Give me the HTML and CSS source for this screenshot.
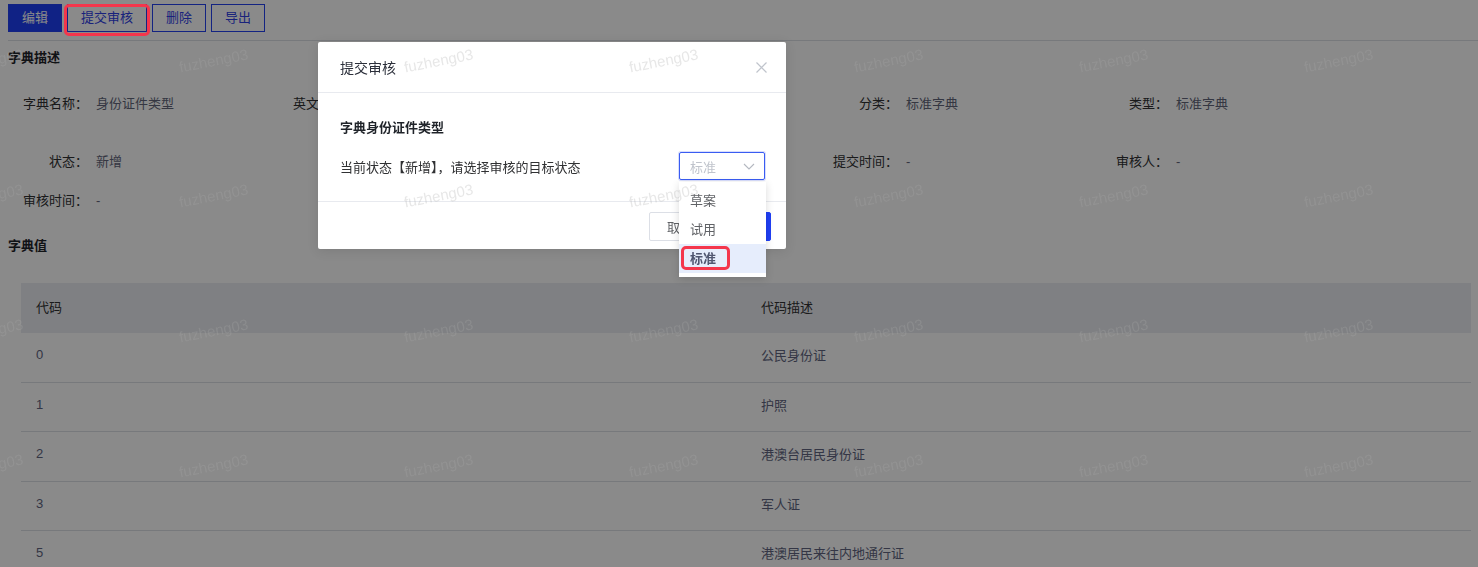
FILE: index.html
```html
<!DOCTYPE html>
<html lang="zh-CN">
<head>
<meta charset="utf-8">
<title>字典详情</title>
<link rel="stylesheet" href="styles.css">
</head>
<body>
<div class="page">
  <div class="toolbar">
    <button class="btn btn-primary">编辑</button>
    <button class="btn">提交审核<span class="mark mark-btn"></span></button>
    <button class="btn">删除</button>
    <button class="btn">导出</button>
  </div>

  <div class="section-title">字典描述</div>
  <div class="desc">
    <div class="item"><span class="label">字典名称：</span><span class="value">身份证件类型</span></div>
    <div class="item"><span class="label">英文名称：</span></div>
    <div class="item"></div>
    <div class="item"><span class="label">分类：</span><span class="value">标准字典</span></div>
    <div class="item"><span class="label">类型：</span><span class="value">标准字典</span></div>

    <div class="item"><span class="label">状态：</span><span class="value">新增</span></div>
    <div class="item"></div>
    <div class="item"></div>
    <div class="item"><span class="label">提交时间：</span><span class="value">-</span></div>
    <div class="item"><span class="label">审核人：</span><span class="value">-</span></div>

    <div class="item"><span class="label">审核时间：</span><span class="value">-</span></div>
  </div>

  <div class="section-title section-values">字典值</div>
  <table class="dict-table">
    <thead>
      <tr><th>代码</th><th>代码描述</th></tr>
    </thead>
    <tbody>
      <tr><td>0</td><td>公民身份证</td></tr>
      <tr><td>1</td><td>护照</td></tr>
      <tr><td>2</td><td>港澳台居民身份证</td></tr>
      <tr><td>3</td><td>军人证</td></tr>
      <tr><td>5</td><td>港澳居民来往内地通行证</td></tr>
    </tbody>
  </table>
</div>

<div class="mask"></div>

<div class="dialog">
  <div class="dialog-header">
    <span class="dialog-title">提交审核</span>
    <svg class="close" width="11" height="11" viewBox="0 0 11 11"><path d="M0.5 0.5 L10.5 10.5 M10.5 0.5 L0.5 10.5" stroke="#c0c4cc" stroke-width="1.2" fill="none"/></svg>
  </div>
  <div class="dialog-body">
    <div class="body-title">字典身份证件类型</div>
    <div class="confirm-row">
      <span class="confirm-text">当前状态【新增】，请选择审核的目标状态</span>
      <div class="select">
        <span class="select-value">标准</span>
        <svg width="12" height="7" viewBox="0 0 12 7"><polyline points="1,1 6,6 11,1" stroke="#b4b8c0" stroke-width="1.1" fill="none"/></svg>
        <div class="dropdown">
          <div class="option">草案</div>
          <div class="option">试用</div>
          <div class="option selected">标准<span class="mark mark-opt"></span></div>
        </div>
      </div>
    </div>
  </div>
  <div class="dialog-footer">
    <button class="dbtn">取消</button>
    <button class="dbtn dbtn-primary">确定</button>
  </div>
</div>

<div class="watermarks">
  <span>fuzheng03</span><span>fuzheng03</span><span>fuzheng03</span><span>fuzheng03</span><span>fuzheng03</span><span>fuzheng03</span><span>fuzheng03</span>
  <span>fuzheng03</span><span>fuzheng03</span><span>fuzheng03</span><span>fuzheng03</span><span>fuzheng03</span><span>fuzheng03</span><span>fuzheng03</span>
  <span>fuzheng03</span><span>fuzheng03</span><span>fuzheng03</span><span>fuzheng03</span><span>fuzheng03</span><span>fuzheng03</span><span>fuzheng03</span>
  <span>fuzheng03</span><span>fuzheng03</span><span>fuzheng03</span><span>fuzheng03</span><span>fuzheng03</span><span>fuzheng03</span><span>fuzheng03</span>
</div>
</body>
</html>
```

FILE: styles.css
```css
* { box-sizing: border-box; }

html { overflow: hidden; }

body {
  margin: 0;
  font-family: "Liberation Sans", "Noto Sans CJK SC", sans-serif;
  font-size: 13px;
  color: #303133;
  background: #fff;
}

.page { padding-left: 8px; }

/* toolbar */
.toolbar {
  display: flex;
  gap: 5px;
  padding-top: 4px;
  height: 41px;
  border-bottom: 1px solid #dcdfe6;
}

.btn {
  position: relative;
  height: 28px;
  padding: 0 13px;
  font-family: inherit;
  font-size: 13px;
  line-height: 26px;
  border: 1px solid #2342f0;
  border-radius: 0;
  background: #fff;
  color: #2f3fe6;
}

.btn-primary {
  background: #1f3ff5;
  color: #fff;
}

.mark {
  position: absolute;
  border: 3px solid #f4364c;
  border-radius: 5px;
}

.mark-btn {
  left: -4px;
  top: -1px;
  width: 86px;
  height: 32px;
  z-index: 30;
}

/* sections */
.section-title {
  margin-top: 9px;
  line-height: 16px;
  font-weight: bold;
  color: #1f2329;
}

.section-values { margin-top: 18px; }

.desc {
  display: grid;
  grid-template-columns: repeat(5, 270px);
  grid-template-rows: 58px 39px 39px;
  margin-top: 18px;
}

.item {
  display: flex;
  height: 39px;
  line-height: 39px;
}

.label {
  width: 80px;
  text-align: right;
  color: #303133;
}

.value {
  margin-left: 8px;
  color: #62667a;
}

/* table */
.dict-table {
  width: 1450px;
  margin: 29px 0 0 13px;
  border-collapse: separate;
  border-spacing: 0;
  table-layout: fixed;
}

.dict-table th {
  height: 50px;
  padding: 0 15px 4px;
  background: #ebedf2;
  text-align: left;
  font-weight: normal;
  color: #303133;
}

.dict-table td {
  height: 49.5px;
  padding: 0 15px 5px;
  border-bottom: 1px solid #dcdfe6;
  color: #606480;
}

/* mask & dialog */
.mask {
  position: fixed;
  inset: 0;
  background: rgba(0, 0, 0, 0.46);
  z-index: 10;
}

.dialog {
  position: absolute;
  left: 318px;
  top: 42px;
  width: 468px;
  background: #fff;
  border-radius: 2px;
  box-shadow: 0 2px 12px rgba(0, 0, 0, 0.1);
  z-index: 20;
}

.dialog-header {
  height: 51px;
  display: flex;
  align-items: center;
  justify-content: space-between;
  padding: 0 19px 0 22px;
  border-bottom: 1px solid #e8eaef;
}

.dialog-title {
  font-size: 14px;
  color: #2b2f3a;
}

.dialog-body {
  padding: 27px 21px 21px 22px;
  border-bottom: 1px solid #e8eaef;
}

.body-title {
  line-height: 16px;
  font-weight: bold;
  color: #1f2329;
}

.confirm-row {
  display: flex;
  align-items: center;
  justify-content: space-between;
  margin-top: 16px;
}

.confirm-text { color: #303133; }

.select {
  position: relative;
  width: 86px;
  height: 28px;
  display: flex;
  align-items: center;
  justify-content: space-between;
  padding: 0 9px 0 10px;
  border: 1px solid #3a5cf2;
  border-radius: 2px;
  box-shadow: 0 0 0 1px rgba(58, 92, 242, 0.2);
  color: #c0c4cc;
}

.dropdown {
  position: absolute;
  left: -1px;
  top: calc(100% + 3px);
  width: 87px;
  padding: 4px 0 4px;
  background: #fff;
  box-shadow: 0 2px 8px rgba(0, 0, 0, 0.15);
  z-index: 25;
}

.option {
  position: relative;
  height: 29px;
  line-height: 29px;
  padding-left: 11px;
  color: #606266;
}

.option.selected {
  background: #e6edfc;
  font-weight: bold;
  color: #505670;
}

.mark-opt {
  left: 2px;
  top: 2px;
  width: 49px;
  height: 24px;
}

.dialog-footer {
  display: flex;
  justify-content: flex-end;
  gap: 6px;
  padding: 10px 15px 8px;
}

.dbtn {
  height: 29px;
  padding: 0 17px;
  font-family: inherit;
  font-size: 13px;
  border: 1px solid #dcdfe6;
  border-radius: 2px;
  background: #fff;
  color: #606266;
}

.dbtn-primary {
  padding: 0 13px;
  background: #1f3ff5;
  border-color: #1f3ff5;
  color: #fff;
}

/* watermark */
.watermarks {
  position: fixed;
  left: -124px;
  top: -7px;
  display: grid;
  grid-template-columns: repeat(7, 225px);
  grid-auto-rows: 135px;
  z-index: 50;
  pointer-events: none;
}

.watermarks span {
  display: flex;
  align-items: center;
  justify-content: center;
  font-family: "Liberation Sans", sans-serif;
  font-size: 15px;
  color: rgba(170, 170, 170, 0.28);
  transform: rotate(-11deg);
}
```
